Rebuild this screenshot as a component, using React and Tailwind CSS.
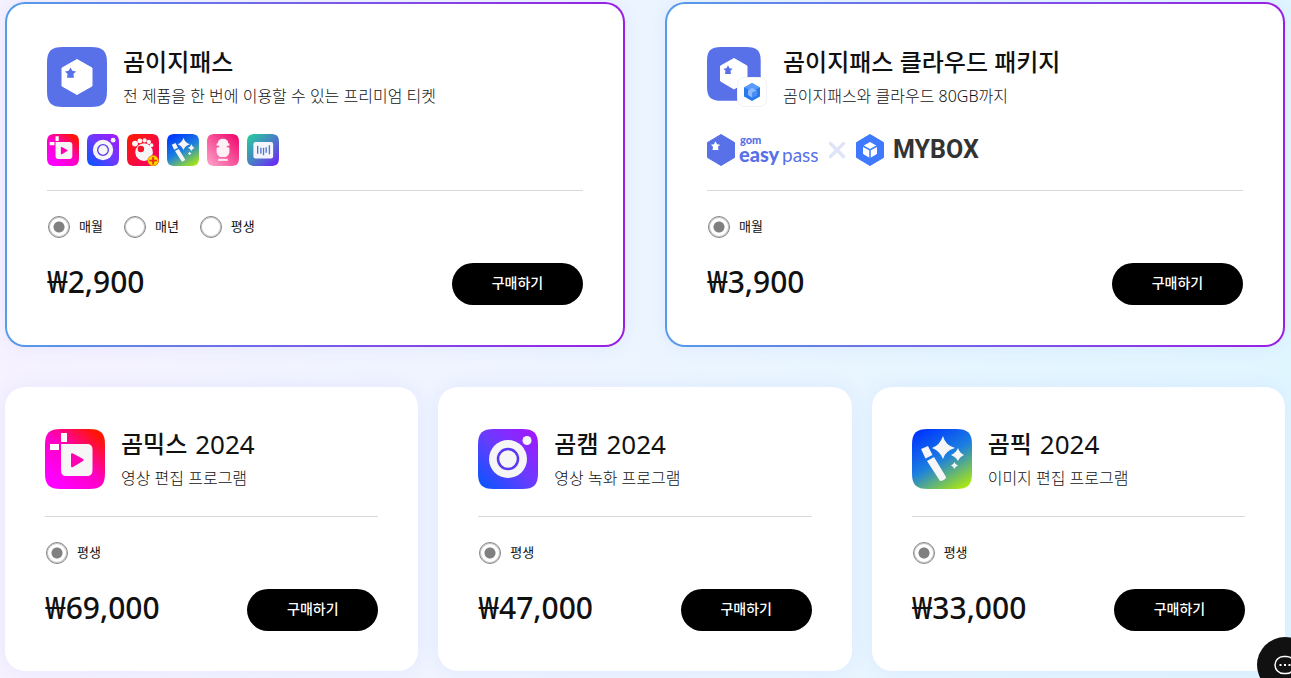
import { useId } from 'react';

const STAR = 'M0 -5.5 L1.8 -2.2 L5.5 -1.6 L2.9 1 L3.5 4.8 L-3.5 4.8 L-2.9 1 L-5.5 -1.6 L-1.8 -2.2 Z';
const TILE = 'M16 0H44C56 0 60 4 60 16V44C60 56 56 60 44 60H16C4 60 0 56 0 44V16C0 4 4 0 16 0Z';

function Tile({ size = 'size-[60px]', from, via, to, x1 = 0, y1 = 1, x2 = 1, y2 = 0, children }) {
  const id = useId();

  return (
    <svg viewBox="0 0 60 60" className={`${size} shrink-0`} aria-hidden="true">
      <defs>
        <linearGradient id={id} x1={x1} y1={y1} x2={x2} y2={y2}>
          <stop offset="0" stopColor={from} />
          {via && <stop offset="0.5" stopColor={via} />}
          <stop offset="1" stopColor={to} />
        </linearGradient>
      </defs>
      <path d={TILE} fill={`url(#${id})`} />
      {children}
    </svg>
  );
}

function MixIcon({ size }) {
  return (
    <Tile size={size} from="#ff00ff" via="#ff00c0" to="#ff1500" x1={0.2} y1={0.9} x2={0.9} y2={0.1}>
      <path d="M16 4h6v9h-6zM5 15h9v6H5z" fill="#fff" />
      <path d="M16 15H42Q47.500 15 47.500 20.500V41Q47.500 47 42 47H21Q16 47 16 41Z" fill="#f6f6f6" />
      <path d="M26 25.500Q26 23.500 28 24.500L38 30Q39.500 31 38 32L28 38Q26 39 26 37Z" fill="#ff00b4" />
    </Tile>
  );
}

function CamIcon({ size }) {
  return (
    <Tile size={size} from="#0057ff" via="#6a3bff" to="#a714ff">
      <circle cx="30" cy="30" r="19" fill="#f6f6f6" />
      <circle cx="30" cy="30" r="10" fill="none" stroke="#5a38f0" strokeWidth="2.500" />
      <circle cx="49" cy="11.500" r="4.500" fill="#f6f6f6" />
    </Tile>
  );
}

function PlayerIcon({ size }) {
  return (
    <Tile size={size} from="#ff1b00" to="#f0006e" x1={0} y1={0} x2={1} y2={1}>
      <circle cx="32" cy="34" r="16.500" fill="#f6f6f6" />
      <circle cx="15" cy="18" r="5.500" fill="#f6f6f6" />
      <circle cx="24" cy="13" r="4.500" fill="#f6f6f6" />
      <circle cx="33" cy="12" r="4" fill="#f6f6f6" />
      <circle cx="41" cy="15" r="4" fill="#f6f6f6" />
      <circle cx="46" cy="21" r="3.500" fill="#f6f6f6" />
      <circle cx="26" cy="28" r="6" fill="#f5122c" />
      <circle cx="49" cy="50" r="10" fill="#ffd800" stroke="#e56a00" strokeWidth="1.500" />
      <path d="M49 43v14M42 50h14" stroke="#e8360a" strokeWidth="3.500" />
    </Tile>
  );
}

function PicIcon({ size }) {
  return (
    <Tile size={size} from="#0036ff" via="#1c80de" to="#a6e516" x1={0.2} y1={0} x2={0.8} y2={1}>
      <path d="M9 20L16 17L20.500 26L13.500 29.500Z M15 32L22 28L34 48Q34 51 28 52Z" fill="#f6f6f6" />
      <path d="M31 7Q33 16 43 19Q33 22 31 30Q28 22 20 19Q28 16 31 7Z" fill="#f6f6f6" />
      <path d="M46 19Q47.500 24 52 26Q47.500 28 46 32Q44 28 39 26Q44 24 46 19Z" fill="#f6f6f6" />
      <path d="M42.500 33Q43 35.500 46 36.500Q43 37.500 42.500 40Q41.500 37.500 39 36.500Q41.500 35.500 42.500 33Z" fill="#f6f6f6" />
    </Tile>
  );
}

function RecorderIcon({ size }) {
  return (
    <Tile size={size} from="#ffa6cb" to="#ef0069">
      <rect x="20" y="9" width="20" height="34" rx="9" fill="#fff0f5" />
      <path d="M18 18h24v4H18zM18 26h24v8Q40 42 34 43H26Q20 42 18 34z" fill="#fff0f5" />
      <path d="M18 23.500h5M37 23.500h5" stroke="#f45d99" strokeWidth="3" />
      <path d="M21 46.500h18v4H21z" fill="#ffe3ee" />
    </Tile>
  );
}

function AudioIcon({ size }) {
  return (
    <Tile size={size} from="#22d39b" via="#497fc4" to="#701cff" x1={0} y1={0} x2={1} y2={1}>
      <rect x="12" y="15" width="37" height="31" rx="4" fill="#f4f4fb" />
      <path d="M20 22v15M26 26v11M31 26v14M36 25v10M42 21v17" stroke="#4f77d2" strokeWidth="2.500" />
    </Tile>
  );
}

function EasyPassIcon() {
  return (
    <Tile from="#5871e8" to="#5871e8">
      <path d="M30 12.500L45 21V39L30 47.500L15 39V21Z" fill="#fff" stroke="#fff" strokeWidth="1" strokeLinejoin="round" />
      <path d={STAR} transform="translate(23.500 26)" fill="#5871e8" />
    </Tile>
  );
}

function PackageIcon() {
  return (
    <svg viewBox="0 0 60 60" className="size-[60px] shrink-0" aria-hidden="true">
      <path d={TILE} transform="scale(0.895)" fill="#5871e8" />
      <path d="M27 11.500L40 19V34L27 42L13.500 34V19Z" fill="#fff" stroke="#fff" strokeLinejoin="round" />
      <path d={STAR} transform="translate(21 23) scale(0.850)" fill="#5871e8" />
      <rect x="30.500" y="30.500" width="29" height="29" rx="7" fill="#fff" stroke="#f2f2f4" />
      <path d="M45 36L53 40.500V49.500L45 54L37 49.500V40.500Z" fill="#2878ee" />
      <path d="M45 36L53 40.500L45 44L37 40.500Z" fill="#5a9bff" />
      <path d="M45 41L49.500 43.500V48L45 50.500L41 48V43.500Z" fill="#8dbaff" />
      <path d="M45 45.500L49.500 43.500V48L45 50.500Z" fill="#4a8df5" />
    </svg>
  );
}

function EasyPassLogo() {
  return (
    <svg viewBox="0 0 111 32" className="h-8 w-[111px] shrink-0" role="img" aria-label="gom easy pass">
      <path d="M14 0.500L27.500 8.500V23.500L14 31.500L0.500 23.500V8.500Z" fill="#5871e8" stroke="#5871e8" strokeLinejoin="round" />
      <path d={STAR} transform="translate(8.500 12) scale(0.850)" fill="#fff" />
      <g fill="#5871e8" fontFamily="Lato, sans-serif">
        <text x="33" y="10" fontSize="11" fontWeight="900">gom</text>
        <text x="32" y="28" fontSize="20" fontWeight="900">easy</text>
        <text x="75" y="28" fontSize="19" fontWeight="400">pass</text>
      </g>
    </svg>
  );
}

function MyBoxLogo() {
  return (
    <div className="flex items-center gap-[9px]">
      <svg viewBox="0 0 28 32" className="h-8 w-7 shrink-0" aria-hidden="true">
        <path d="M14 0.500L27.500 8.500V23.500L14 31.500L0.500 23.500V8.500Z" fill="#3f79ff" stroke="#3f79ff" strokeLinejoin="round" />
        <path d="M14 8.500L20.500 12.200V19.800L14 23.500L7.500 19.800V12.200Z" fill="#fff" stroke="#fff" strokeLinejoin="round" />
        <path d="M7 12L14 16L21 12M14 16V24" fill="none" stroke="#3f79ff" strokeWidth="1.500" />
      </svg>
      <span className="font-[Roboto,sans-serif] text-[25px] leading-8 font-bold text-[#333]">MYBOX</span>
    </div>
  );
}

function Plan({ id, icon, name, year, description, extra, terms, price, featured }) {
  const frame = featured
    ? 'border-2 border-transparent [background:linear-gradient(#fff,#fff)_padding-box,linear-gradient(to_right,#559ceb,#9a1ee4)_border-box]'
    : 'bg-white';

  return (
    <section className={`rounded-[20px] p-10 shadow-[0_0_20px_rgba(80,90,240,0.08)] ${frame}`}>
      <div className={featured ? 'flex h-[66px] items-center gap-4' : 'flex h-16 items-center gap-4'}>
        {icon}
        <div className="pt-0.5">
          <h2 className="flex items-center gap-2 text-2xl leading-9 font-medium">
            {name}
            {year && <span className="text-[26px] font-normal">{year}</span>}
          </h2>
          <p className="text-base leading-8 font-light">{description}</p>
        </div>
      </div>

      {extra && <div className="mt-6 flex h-8 items-center">{extra}</div>}

      <div className={featured ? 'mt-6 border-t border-[#d9d9d9] pt-6' : 'mt-[25px] border-t border-[#d9d9d9] pt-6'}>
        <div className="flex h-6 items-center gap-5">
          {terms.map((term, index) => (
            <label key={term} className="flex items-center gap-[9px] pl-px text-[13px] leading-6">
              <input
                type="radio"
                name={id}
                defaultChecked={index === 0}
                className="size-[22px] appearance-none rounded-full border border-[#858585] shadow-[inset_0_0_0_1px_#c4c4c4] checked:bg-[radial-gradient(circle,#808080_5px,transparent_6px)]"
              />
              <span className="pb-0.5">{term}</span>
            </label>
          ))}
        </div>
        <div className="mt-6 flex h-[42px] items-center justify-between">
          <strong className="pb-1 text-[30px] leading-10 font-medium">{price}</strong>
          <button type="button" className="h-[42px] w-[131px] rounded-full bg-black pb-0.5 text-sm font-medium text-white">
            구매하기
          </button>
        </div>
      </div>
    </section>
  );
}

export default function App() {
  return (
    <main className="min-h-screen bg-linear-to-r from-[#f6f2ff] via-[#ecf5ff] to-[#e0f6ff] pt-0.5 pr-1.5 pb-[7px] pl-[5px] font-['Noto_Sans','Noto_Sans_CJK_KR',sans-serif] text-[#111]">
      <div className="mx-auto max-w-[1280px]">
        <div className="grid grid-cols-2 gap-10">
          <Plan
            id="easypass"
            featured
            icon={<EasyPassIcon />}
            name="곰이지패스"
            description="전 제품을 한 번에 이용할 수 있는 프리미엄 티켓"
            extra={
              <div className="flex gap-2">
                <MixIcon size="size-8" />
                <CamIcon size="size-8" />
                <PlayerIcon size="size-8" />
                <PicIcon size="size-8" />
                <RecorderIcon size="size-8" />
                <AudioIcon size="size-8" />
              </div>
            }
            terms={['매월', '매년', '평생']}
            price="₩2,900"
          />
          <Plan
            id="package"
            featured
            icon={<PackageIcon />}
            name="곰이지패스 클라우드 패키지"
            description="곰이지패스와 클라우드 80GB까지"
            extra={
              <div className="flex items-center gap-2.5">
                <EasyPassLogo />
                <svg viewBox="0 0 18 18" className="size-[18px]" aria-hidden="true">
                  <path d="M2.500 2.500L15.500 15.500M15.500 2.500L2.500 15.500" stroke="#dfe5f6" strokeWidth="3.500" strokeLinecap="round" />
                </svg>
                <MyBoxLogo />
              </div>
            }
            terms={['매월']}
            price="₩3,900"
          />
        </div>

        <div className="mt-10 grid grid-cols-3 gap-5">
          <Plan
            id="mix"
            icon={<MixIcon />}
            name="곰믹스"
            year="2024"
            description="영상 편집 프로그램"
            terms={['평생']}
            price="₩69,000"
          />
          <Plan
            id="cam"
            icon={<CamIcon />}
            name="곰캠"
            year="2024"
            description="영상 녹화 프로그램"
            terms={['평생']}
            price="₩47,000"
          />
          <Plan
            id="pic"
            icon={<PicIcon />}
            name="곰픽"
            year="2024"
            description="이미지 편집 프로그램"
            terms={['평생']}
            price="₩33,000"
          />
        </div>
      </div>

      <button
        type="button"
        aria-label="채팅 상담"
        className="fixed -right-[22px] -bottom-[15px] flex size-14 items-center justify-center rounded-full bg-[#111]"
      >
        <svg viewBox="0 0 24 20" className="h-5 w-6" aria-hidden="true">
          <rect x="2" y="1.500" width="20" height="17" rx="8.500" fill="none" stroke="#fff" strokeWidth="1.500" />
          <path d="M6.500 9h2v2h-2zM11 9h2v2h-2zM15.500 9h2v2h-2z" fill="#fff" />
        </svg>
      </button>
    </main>
  );
}
